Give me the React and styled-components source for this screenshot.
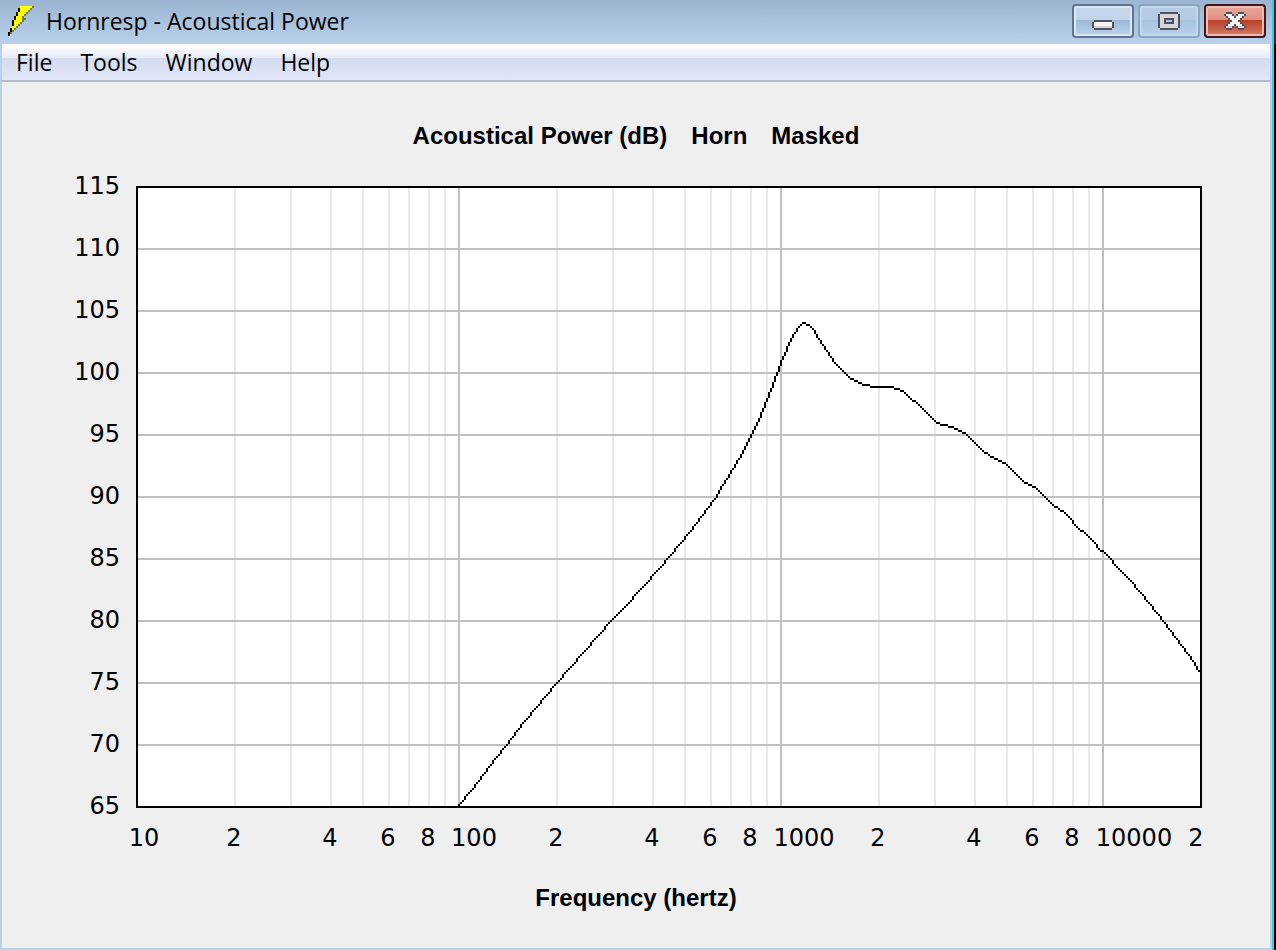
import styled, { createGlobalStyle } from 'styled-components';

const GlobalStyle = createGlobalStyle`
    * {
        box-sizing: border-box;
    }

    body {
        margin: 0;
        background-color: #000000;
    }
`;

const Desktop = styled.div`
    display: flex;
    min-height: 100vh;
    padding-right: 2px;
    background: linear-gradient(#2c2c2c 44px, #000000 44px);
`;

const Frame = styled.div`
    display: flex;
    flex: 1;
    flex-direction: column;
    min-width: 0;
    border-right: 2px solid #35c9f2;
    background: linear-gradient(#9ab4d1, #b9d1ea 44px);
    font-family: 'Open Sans', 'Noto Sans', sans-serif;
    color: #000000;
`;

const TitleBar = styled.header`
    display: flex;
    align-items: center;
    height: 44px;
    padding: 0 6px 2px 8px;
`;

const Title = styled.h1`
    flex: 1;
    margin: 0 0 0 12px;
    font-size: 23px;
    font-weight: 400;
    line-height: 32px;
    white-space: nowrap;
`;

const WindowButtons = styled.div`
    display: flex;
    gap: 4px;
`;

const tones = {
    normal: {
        border: '#62738f',
        shine: '#dbe7f5',
        fill: 'linear-gradient(#c4d5e9 46%, #9cb7d4 46%, #bad2ec)',
    },
    disabled: {
        border: '#8ba5c3',
        shine: '#c3d7ec',
        fill: 'linear-gradient(#b5cbe4 46%, #a8c3e0 46%, #b8d0ea)',
    },
    close: {
        border: '#471422',
        shine: '#eebdb2',
        fill: 'linear-gradient(#e9a99c, #de8f80 46%, #b83d24 46%, #d4806a)',
    },
};

const WindowButton = styled.button`
    display: flex;
    width: 62px;
    height: 34px;
    padding: 0;
    align-items: center;
    justify-content: center;
    border: 2px solid ${({ $tone }) => tones[$tone].border};
    border-radius: 4px;
    background: ${({ $tone }) => tones[$tone].fill};
    box-shadow: inset 0 0 0 2px ${({ $tone }) => tones[$tone].shine};
`;

const MenuBar = styled.nav`
    display: flex;
    align-items: center;
    height: 38px;
    margin: 0 2px;
    border-bottom: 2px solid #b6bbd0;
    background: linear-gradient(
        #ffffff,
        #e6eaf6 14px,
        #d4dbee 14px,
        #e1e7f6
    );
`;

const MenuItem = styled.button`
    height: 36px;
    padding: 0 14px;
    border: none;
    background: transparent;
    color: inherit;
    font-family: inherit;
    font-size: 23px;
    line-height: 36px;
`;

const Content = styled.main`
    display: flex;
    flex: 1;
    flex-direction: column;
    margin: 0 2px 2px;
    padding-top: 38px;
    background-color: #efefef;
`;

const Caption = styled.h2`
    display: flex;
    justify-content: center;
    gap: 24px;
    margin: 0;
    font-family: 'Liberation Sans', Arial, sans-serif;
    font-size: 24px;
    font-weight: 700;
    line-height: 32px;
`;

const Chart = styled.svg`
    display: block;
    width: 100%;
    margin: 8px 0 22px;
    font-family: 'DejaVu Sans', Verdana, sans-serif;
    font-size: 12px;
`;

const palette = {
    k: '#000000',
    y: '#ffff00',
    o: '#808000',
    g: '#50515f',
    w: '#f4f4f4',
    s: '#d6d6da',
    b: '#a9c4e0',
};

const BOLT = [
    '......yyyyyyo',
    '.....kyyyyyo.',
    '.....kyyyyo..',
    '....kyyyyo...',
    '....kyyyo....',
    '...kyyyo.....',
    '...kyyyoo....',
    '..kyyyyo.....',
    '..kyyyo......',
    '..kyyo.......',
    '..yyo........',
    '.kyo.........',
    '.ko..........',
    'ko...........',
    'k............',
];

const MINIMIZE = [
    '...........',
    '...........',
    '...........',
    '...........',
    '.ggggggggg.',
    'gwwwwwwwwwg',
    'gwwwwwwwwwg',
    'gsssssssssg',
    '.ggggggggg.',
];

const MAXIMIZE = [
    '.ggggggggg.',
    'gsssssssssg',
    'gsssssssssg',
    'gssgggggssg',
    'gssgbbbgssg',
    'gssgggggssg',
    'gsssssssssg',
    'gsssssssssg',
    '.ggggggggg.',
];

const CLOSE = [
    '.ggg...ggg.',
    'gwwwg.gwwwg',
    '.gwwwgwwwg.',
    '..gwwwwwg..',
    '...gwwwg...',
    '..gwwwwwg..',
    '.gwwwgwwwg.',
    'gsssg.gsssg',
    '.ggg...ggg.',
];

const menus = ['File', 'Tools', 'Window', 'Help'];

// one unit is two screen pixels at the default window width
const LEFT = 67;
const TOP = 13;
const RIGHT = 599;
const BOTTOM = 323;
const DECADE = 161;
const STEP = 31;

const levels = [115, 110, 105, 100, 95, 90, 85, 80, 75, 70, 65];
const minorOffsets = [49, 77, 97, 113, 126, 136, 146, 154];

const frequencies = [
    [71, '10'],
    [116, '2'],
    [164, '4'],
    [193, '6'],
    [213, '8'],
    [236, '100'],
    [277, '2'],
    [325, '4'],
    [354, '6'],
    [374, '8'],
    [401, '1000'],
    [438, '2'],
    [486, '4'],
    [515, '6'],
    [535, '8'],
    [566, '10000'],
    [597, '2'],
];

const response = [
    [228, 322], [234, 315], [240, 307], [246, 299], [251, 293], [257, 285],
    [266, 274], [277, 261], [283, 254], [291, 245], [304, 230], [310, 224],
    [320, 213], [328, 204], [333, 198], [339, 191], [343, 186], [347, 181],
    [352, 174], [356, 169], [360, 162], [365, 154], [368, 149], [374, 137],
    [379, 127], [383, 117], [389, 101], [392, 94], [395, 87], [398, 83],
    [400, 81], [401, 81], [403, 82], [405, 84], [406, 86], [408, 89],
    [412, 95], [416, 101], [420, 105], [424, 109], [427, 110], [430, 112],
    [433, 112], [434, 113], [445, 113], [446, 114], [448, 114], [450, 115],
    [454, 119], [456, 120], [466, 130], [470, 132], [475, 133], [479, 135],
    [482, 137], [487, 142], [491, 146], [492, 146], [494, 148], [497, 149],
    [501, 151], [502, 152], [511, 161], [512, 161], [516, 163], [525, 172],
    [528, 174], [531, 176], [534, 179], [535, 181], [539, 185], [540, 185],
    [546, 191], [547, 193], [549, 195], [550, 195], [554, 199], [555, 201],
    [563, 209], [569, 216], [577, 226], [581, 231], [583, 234], [587, 239],
    [589, 242], [593, 247], [598, 255],
];

// draws the trace as square dots so it stays unsmoothed
function tracePath(points) {
    let path = '';
    for (let i = 1; i < points.length; i++) {
        const [x0, y0] = points[i - 1];
        const [x1, y1] = points[i];
        const steps = Math.max(Math.abs(x1 - x0), Math.abs(y1 - y0));
        for (let s = 0; s <= steps; s++) {
            const x = Math.round(x0 + ((x1 - x0) * s) / steps);
            const y = Math.round(y0 + ((y1 - y0) * s) / steps);
            path += `M${x} ${y}h1v1h-1z`;
        }
    }
    return path;
}

function PixelIcon({ rows }) {
    const width = rows[0].length;
    return (
        <svg
            width={width * 2}
            height={rows.length * 2}
            viewBox={`0 0 ${width} ${rows.length}`}
            shapeRendering="crispEdges"
            aria-hidden="true"
        >
            {rows.map((row, y) =>
                [...row].map(
                    (cell, x) =>
                        palette[cell] && (
                            <rect
                                key={`${x}-${y}`}
                                x={x}
                                y={y}
                                width="1"
                                height="1"
                                fill={palette[cell]}
                            />
                        )
                )
            )}
        </svg>
    );
}

function PowerChart() {
    const minorLines = [0, 1, 2].flatMap((decade) =>
        minorOffsets.map((offset) => LEFT + decade * DECADE + offset)
    );
    const majorLines = [1, 2, 3].map((decade) => LEFT + decade * DECADE);

    return (
        <Chart viewBox="0 0 634 350" role="img">
            <g shapeRendering="crispEdges">
                <rect
                    x={LEFT}
                    y={TOP}
                    width={RIGHT - LEFT}
                    height={BOTTOM - TOP}
                    fill="#ffffff"
                />
                {minorLines.map((x) => (
                    <rect
                        key={x}
                        x={x}
                        y={TOP}
                        width="1"
                        height={BOTTOM - TOP}
                        fill="#e8e8e8"
                    />
                ))}
                {levels.map((level, i) => (
                    <rect
                        key={level}
                        x={LEFT}
                        y={TOP + i * STEP}
                        width={RIGHT - LEFT}
                        height="1"
                        fill="#c0c0c0"
                    />
                ))}
                {majorLines.map((x) => (
                    <rect
                        key={x}
                        x={x}
                        y={TOP}
                        width="1"
                        height={BOTTOM - TOP}
                        fill="#c0c0c0"
                    />
                ))}
                <path d={tracePath(response)} fill="#000000" />
                <path
                    d={`M${LEFT} ${TOP}H${RIGHT + 1}V${BOTTOM + 1}H${LEFT}z
                        M${LEFT + 1} ${TOP + 1}V${BOTTOM}H${RIGHT}V${TOP + 1}z`}
                    fill="#000000"
                    fillRule="evenodd"
                />
            </g>
            <g textAnchor="end">
                {levels.map((level, i) => (
                    <text key={level} x="59" y={TOP + i * STEP + 4}>
                        {level}
                    </text>
                ))}
            </g>
            <g textAnchor="middle">
                {frequencies.map(([x, label]) => (
                    <text key={x} x={x} y="343">
                        {label}
                    </text>
                ))}
            </g>
        </Chart>
    );
}

export default function App() {
    return (
        <>
            <GlobalStyle />
            <Desktop>
                <Frame>
                    <TitleBar>
                        <PixelIcon rows={BOLT} />
                        <Title>Hornresp - Acoustical Power</Title>
                        <WindowButtons>
                            <WindowButton $tone="normal" aria-label="Minimize">
                                <PixelIcon rows={MINIMIZE} />
                            </WindowButton>
                            <WindowButton
                                $tone="disabled"
                                aria-label="Maximize"
                                disabled
                            >
                                <PixelIcon rows={MAXIMIZE} />
                            </WindowButton>
                            <WindowButton $tone="close" aria-label="Close">
                                <PixelIcon rows={CLOSE} />
                            </WindowButton>
                        </WindowButtons>
                    </TitleBar>
                    <MenuBar>
                        {menus.map((menu) => (
                            <MenuItem key={menu} type="button">
                                {menu}
                            </MenuItem>
                        ))}
                    </MenuBar>
                    <Content>
                        <Caption>
                            <span>Acoustical Power (dB)</span>
                            <span>Horn</span>
                            <span>Masked</span>
                        </Caption>
                        <PowerChart />
                        <Caption as="p">Frequency (hertz)</Caption>
                    </Content>
                </Frame>
            </Desktop>
        </>
    );
}
